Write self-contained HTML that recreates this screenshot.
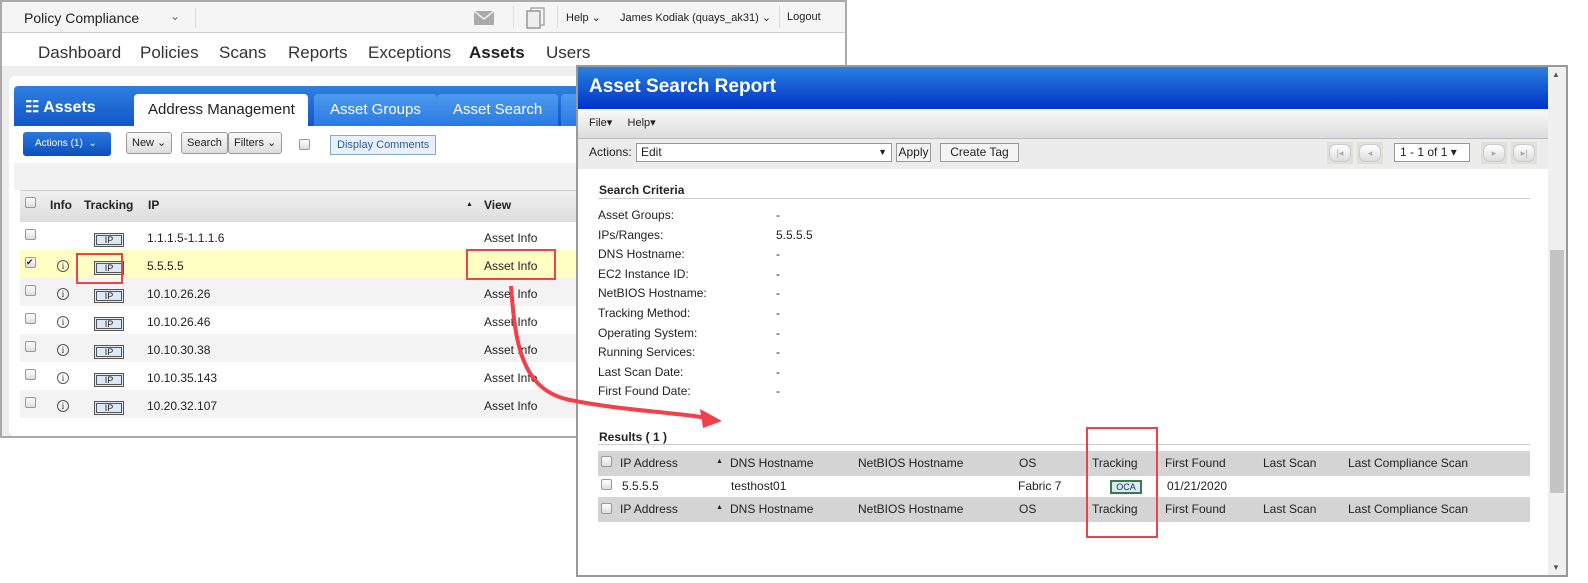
<!DOCTYPE html>
<html><head><style>
*{margin:0;padding:0;box-sizing:border-box}
body{width:1588px;height:583px;background:#fff;position:relative;overflow:hidden;font-family:"Liberation Sans",Arial,sans-serif;font-size:12px;color:#222}
.a{position:absolute}
.cb{position:absolute;width:11px;height:11px;border:1px solid #999;border-radius:2px;background:linear-gradient(#fff,#ddd)}
.ipb{position:absolute;width:30px;height:14px;border:3px double #555;background:#dde8f5;font-size:9px;text-align:center;line-height:8px}
.inf{position:absolute;width:12px;height:12px;border:1px solid #555;border-radius:50%;font-size:9px;text-align:center;line-height:10px;font-family:"Liberation Serif",serif}
.btn{position:absolute;height:22px;border:1px solid #999;border-radius:3px;background:linear-gradient(#fafafa,#ddd);font-size:11px;line-height:20px;padding:0 5px}
.tab{position:absolute;top:94px;height:32px;background:linear-gradient(#4d9af0,#2a7ae2);color:#fff;font-size:15px;line-height:31px;padding:0 16px;border-radius:4px 4px 0 0}
.pb{position:absolute;width:26px;height:22px;background:#e0e0d8;top:142px;padding:2px}
.pb i{display:block;width:22px;height:18px;border:1px solid #ccc;border-radius:7px;background:linear-gradient(#fff,#ddd);font-style:normal;font-size:9px;color:#aaa;text-align:center;line-height:16px}
</style></head><body>
<!-- left window -->
<div class="a" style="left:0;top:0;width:847px;height:438px;border:2px solid #aaa;background:#fff"></div>
<div class="a" style="left:2px;top:2px;width:843px;height:31px;background:#f5f5f5;border-bottom:1px solid #ccc"></div>
<div class="a" style="left:24px;top:10px;font-size:14px">Policy Compliance</div>
<div class="a" style="left:170px;top:9px;font-size:12px;color:#666">⌄</div>
<div class="a" style="left:195px;top:8px;width:1px;height:20px;background:#ddd"></div>
<svg class="a" style="left:474px;top:11px" width="20" height="14"><rect width="20" height="14" fill="#aaa"/><path d="M0 0 L10 8 L20 0" fill="none" stroke="#eee" stroke-width="1.5"/></svg>
<div class="a" style="left:513px;top:6px;width:1px;height:22px;background:#ddd"></div>
<svg class="a" style="left:526px;top:7px" width="20" height="22"><rect x="5" y="1" width="13" height="17" fill="none" stroke="#aaa" stroke-width="1.5"/><rect x="1" y="4" width="13" height="17" fill="#eee" stroke="#999" stroke-width="1.5"/></svg>
<div class="a" style="left:557px;top:6px;width:1px;height:22px;background:#ddd"></div>
<div class="a" style="left:566px;top:11px;font-size:11px">Help ⌄</div>
<div class="a" style="left:620px;top:11px;font-size:11px">James Kodiak (quays_ak31) ⌄</div>
<div class="a" style="left:779px;top:6px;width:1px;height:22px;background:#ddd"></div>
<div class="a" style="left:787px;top:11px;font-size:11px">Logout</div>
<div class="a" style="left:38px;top:43px;font-size:17px;color:#333">Dashboard</div>
<div class="a" style="left:140px;top:43px;font-size:17px;color:#333">Policies</div>
<div class="a" style="left:219px;top:43px;font-size:17px;color:#333">Scans</div>
<div class="a" style="left:288px;top:43px;font-size:17px;color:#333">Reports</div>
<div class="a" style="left:368px;top:43px;font-size:17px;color:#333">Exceptions</div>
<div class="a" style="left:469px;top:43px;font-size:17px;font-weight:bold;color:#222">Assets</div>
<div class="a" style="left:546px;top:43px;font-size:17px;color:#333">Users</div>
<div class="a" style="left:2px;top:66px;width:843px;height:370px;background:#eee"></div>
<div class="a" style="left:9px;top:76px;width:836px;height:360px;background:#fff;border-radius:6px"></div>
<div class="a" style="left:14px;top:86px;width:570px;height:40px;background:linear-gradient(#2f80e0,#1256c8);border-radius:4px 4px 0 0"></div>
<div class="a" style="left:25px;top:97px;font-size:16px;color:#fff;font-weight:bold">☷ Assets</div>
<div class="a" style="left:134px;top:94px;height:32px;width:174px;background:#fff;border-radius:4px 4px 0 0;font-size:15px;line-height:31px;padding-left:14px">Address Management</div>
<div class="tab" style="left:314px">Asset Groups</div>
<div class="tab" style="left:437px">Asset Search</div>
<div class="tab" style="left:561px;width:20px;padding:0"></div>
<div class="a" style="left:14px;top:126px;width:570px;height:38px;background:#fff"></div>
<div class="a" style="left:23px;top:132px;width:88px;height:24px;background:linear-gradient(#2b78e0,#0d4fb8);border-radius:3px;color:#fff;font-size:10px;line-height:24px;padding-left:12px">Actions (1) &nbsp;⌄</div>
<div class="btn" style="left:126px;top:132px">New ⌄</div>
<div class="btn" style="left:181px;top:132px">Search</div>
<div class="btn" style="left:228px;top:132px">Filters ⌄</div>
<div class="cb" style="left:299px;top:139px"></div>
<div class="a" style="left:330px;top:135px;height:20px;border:1px solid #8ab;background:#e8f1fb;color:#2a5b9a;font-size:11px;line-height:18px;padding:0 6px">Display Comments</div>
<div class="a" style="left:14px;top:163px;width:570px;height:27px;background:#f2f2f2"></div>
<div class="a" style="left:20px;top:190px;width:564px;height:32px;background:linear-gradient(#f0f0f0,#ddd);border-top:1px solid #ccc"></div>
<div class="cb" style="left:25px;top:197px"></div>
<div class="a" style="left:50px;top:198px;font-weight:bold">Info</div>
<div class="a" style="left:84px;top:198px;font-weight:bold">Tracking</div>
<div class="a" style="left:148px;top:198px;font-weight:bold">IP</div>
<div class="a" style="left:466px;top:201px;font-size:7px">▲</div>
<div class="a" style="left:484px;top:198px;font-weight:bold">View</div>
<div class="a" style="left:20px;top:250px;width:564px;height:28px;background:#ffffc4"></div>
<div class="a" style="left:20px;top:278px;width:564px;height:28px;background:#f3f3f3"></div>
<div class="a" style="left:20px;top:334px;width:564px;height:28px;background:#f3f3f3"></div>
<div class="a" style="left:20px;top:390px;width:564px;height:28px;background:#f3f3f3"></div>
<div class="cb" style="left:25px;top:229px"></div><div class="ipb" style="left:94px;top:233px">IP</div><div class="a" style="left:147px;top:231px">1.1.1.5-1.1.1.6</div><div class="a" style="left:484px;top:231px">Asset Info</div>
<div class="cb" style="left:25px;top:257px;font-size:9px;line-height:9px">✔</div><div class="inf" style="left:57px;top:260px">i</div><div class="ipb" style="left:94px;top:261px">IP</div><div class="a" style="left:147px;top:259px">5.5.5.5</div><div class="a" style="left:484px;top:259px">Asset Info</div>
<div class="cb" style="left:25px;top:285px"></div><div class="inf" style="left:57px;top:288px">i</div><div class="ipb" style="left:94px;top:289px">IP</div><div class="a" style="left:147px;top:287px">10.10.26.26</div><div class="a" style="left:484px;top:287px">Asset Info</div>
<div class="cb" style="left:25px;top:313px"></div><div class="inf" style="left:57px;top:316px">i</div><div class="ipb" style="left:94px;top:317px">IP</div><div class="a" style="left:147px;top:315px">10.10.26.46</div><div class="a" style="left:484px;top:315px">Asset Info</div>
<div class="cb" style="left:25px;top:341px"></div><div class="inf" style="left:57px;top:344px">i</div><div class="ipb" style="left:94px;top:345px">IP</div><div class="a" style="left:147px;top:343px">10.10.30.38</div><div class="a" style="left:484px;top:343px">Asset Info</div>
<div class="cb" style="left:25px;top:369px"></div><div class="inf" style="left:57px;top:372px">i</div><div class="ipb" style="left:94px;top:373px">IP</div><div class="a" style="left:147px;top:371px">10.10.35.143</div><div class="a" style="left:484px;top:371px">Asset Info</div>
<div class="cb" style="left:25px;top:397px"></div><div class="inf" style="left:57px;top:400px">i</div><div class="ipb" style="left:94px;top:401px">IP</div><div class="a" style="left:147px;top:399px">10.20.32.107</div><div class="a" style="left:484px;top:399px">Asset Info</div>
<div class="a" style="left:76px;top:253px;width:47px;height:31px;border:2px solid #e8444a"></div>
<div class="a" style="left:466px;top:249px;width:90px;height:31px;border:2px solid #e8444a"></div>

<!-- popup -->
<div class="a" style="left:576px;top:65px;width:992px;height:512px;border:2px solid #999;background:#fff"></div>
<div class="a" style="left:578px;top:67px;width:970px;height:42px;background:linear-gradient(#2a80e0,#0032c8)"></div>
<div class="a" style="left:589px;top:76px;font-size:19px;font-weight:bold;color:#fff">Asset Search Report</div>
<div class="a" style="left:578px;top:109px;width:970px;height:30px;background:linear-gradient(#fafafa,#ddd);border-bottom:1px solid #bbb"></div>
<div class="a" style="left:589px;top:116px;font-size:11px">File▾ &nbsp;&nbsp;&nbsp; Help▾</div>
<div class="a" style="left:578px;top:139px;width:970px;height:30px;background:#ececec"></div>
<div class="a" style="left:589px;top:145px;font-size:12px">Actions:</div>
<div class="a" style="left:636px;top:143px;width:256px;height:19px;border:1px solid #999;background:#fff;font-size:12px;line-height:17px;padding-left:4px">Edit<span style="position:absolute;right:4px;font-size:9px">▼</span></div>
<div class="a" style="left:896px;top:143px;width:35px;height:19px;border:1px solid #999;background:#f4f4f4;font-size:12px;line-height:17px;text-align:center">Apply</div>
<div class="a" style="left:940px;top:143px;width:79px;height:19px;border:1px solid #999;background:#f4f4f4;font-size:12px;line-height:17px;text-align:center">Create Tag</div>
<div class="pb" style="left:1327px"><i>|◂</i></div><div class="pb" style="left:1357px"><i>◂</i></div>
<div class="a" style="left:1394px;top:143px;width:76px;height:19px;border:1px solid #999;background:#fff;font-size:12px;line-height:17px;padding-left:5px">1 - 1 of 1 ▾</div>
<div class="pb" style="left:1481px"><i>▸</i></div><div class="pb" style="left:1511px"><i>▸|</i></div>
<div class="a" style="left:1548px;top:67px;width:18px;height:508px;background:#f0f0f0"></div>
<div class="a" style="left:1550px;top:250px;width:14px;height:243px;background:#c4c4c4"></div>
<div class="a" style="left:1552px;top:70px;font-size:8px;color:#555">▲</div>
<div class="a" style="left:1552px;top:563px;font-size:8px;color:#555">▼</div>
<div class="a" style="left:599px;top:183px;font-weight:bold;font-size:12px">Search Criteria</div>
<div class="a" style="left:598px;top:198px;width:932px;height:1px;background:#ccc"></div>
<div class="a" style="left:598px;top:206px;line-height:19.6px;font-size:12px">Asset Groups:<br>IPs/Ranges:<br>DNS Hostname:<br>EC2 Instance ID:<br>NetBIOS Hostname:<br>Tracking Method:<br>Operating System:<br>Running Services:<br>Last Scan Date:<br>First Found Date:</div>
<div class="a" style="left:776px;top:206px;line-height:19.6px;font-size:12px">-<br>5.5.5.5<br>-<br>-<br>-<br>-<br>-<br>-<br>-<br>-</div>
<div class="a" style="left:599px;top:430px;font-weight:bold;font-size:12px">Results ( 1 )</div>
<div class="a" style="left:598px;top:444px;width:932px;height:1px;background:#ccc"></div>
<div class="a" style="left:598px;top:451px;width:932px;height:25px;background:#d4d4d4"></div>
<div class="a" style="left:598px;top:497px;width:932px;height:25px;background:#d4d4d4"></div>
<div class="cb" style="left:601px;top:456px"></div><div class="cb" style="left:601px;top:479px"></div><div class="cb" style="left:601px;top:503px"></div>
<div class="a" style="left:620px;top:456px">IP Address</div><div class="a" style="left:716px;top:458px;font-size:7px">▲</div><div class="a" style="left:730px;top:456px">DNS Hostname</div><div class="a" style="left:858px;top:456px">NetBIOS Hostname</div><div class="a" style="left:1019px;top:456px">OS</div><div class="a" style="left:1092px;top:456px">Tracking</div><div class="a" style="left:1165px;top:456px">First Found</div><div class="a" style="left:1263px;top:456px">Last Scan</div><div class="a" style="left:1348px;top:456px">Last Compliance Scan</div>
<div class="a" style="left:622px;top:479px">5.5.5.5</div><div class="a" style="left:731px;top:479px">testhost01</div><div class="a" style="left:1018px;top:479px">Fabric 7</div>
<div class="a" style="left:1110px;top:480px;width:32px;height:14px;border:2px solid #3a7a4a;background:#dde8f5;font-size:9px;text-align:center;line-height:10px;color:#135">OCA</div>
<div class="a" style="left:1167px;top:479px">01/21/2020</div>
<div class="a" style="left:620px;top:502px">IP Address</div><div class="a" style="left:716px;top:504px;font-size:7px">▲</div><div class="a" style="left:730px;top:502px">DNS Hostname</div><div class="a" style="left:858px;top:502px">NetBIOS Hostname</div><div class="a" style="left:1019px;top:502px">OS</div><div class="a" style="left:1092px;top:502px">Tracking</div><div class="a" style="left:1165px;top:502px">First Found</div><div class="a" style="left:1263px;top:502px">Last Scan</div><div class="a" style="left:1348px;top:502px">Last Compliance Scan</div>
<div class="a" style="left:1086px;top:427px;width:72px;height:111px;border:2px solid #e8444a"></div>
<svg class="a" style="left:0;top:0" width="1588" height="583">
<path d="M511 286 C515 340 520 390 570 400 C620 410 670 412 708 418" fill="none" stroke="#f0404a" stroke-width="4"/>
<path d="M722 421 L700 409 L703 428 Z" fill="#f0404a"/>
</svg>
</body></html>
